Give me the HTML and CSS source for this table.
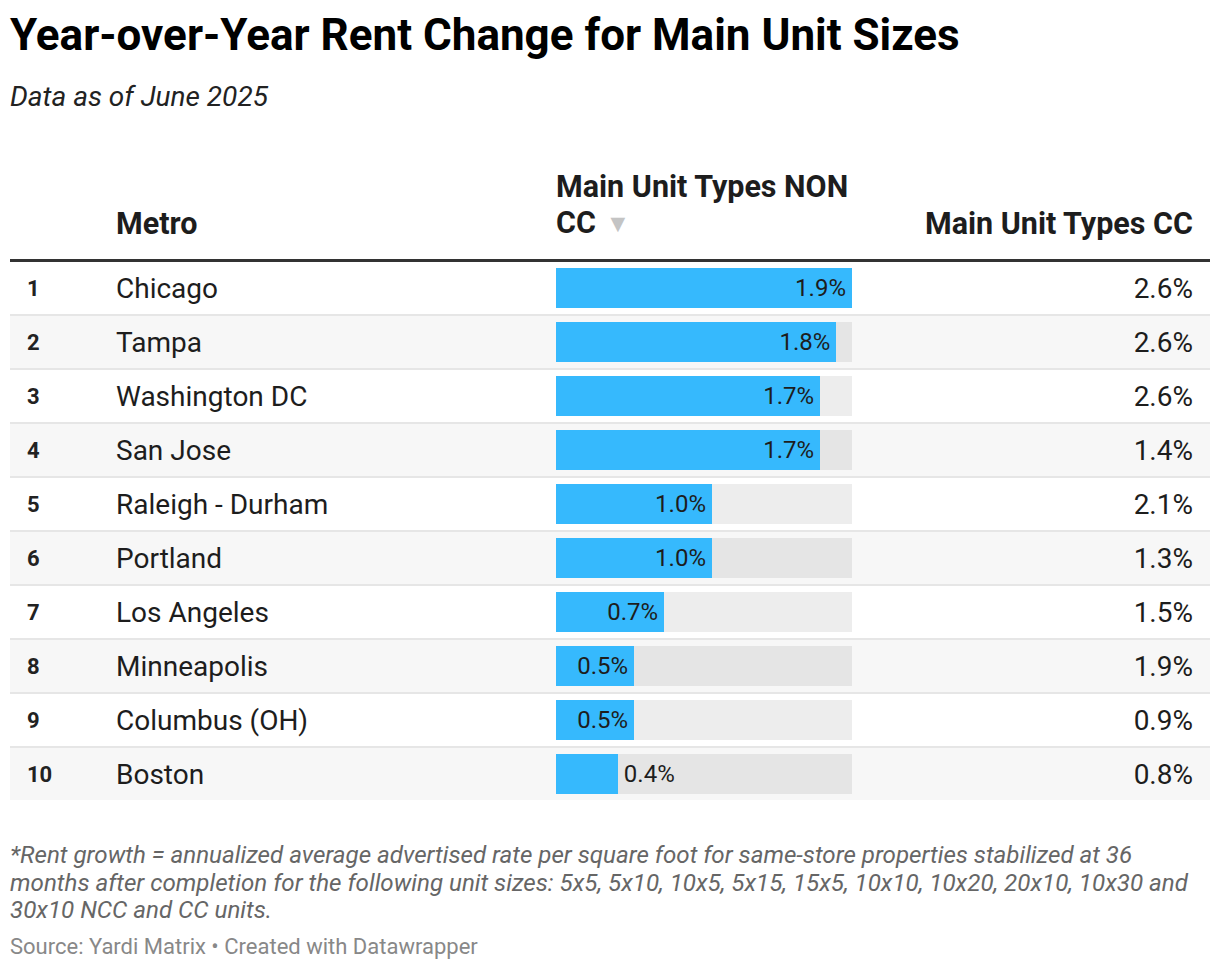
FILE: index.html
```html
<!DOCTYPE html>
<html lang="en">
<head>
<meta charset="utf-8">
<title>Year-over-Year Rent Change for Main Unit Sizes</title>
<link rel="stylesheet" href="styles.css">
</head>
<body>
<div class="chart">
  <h1 class="title">Year-over-Year Rent Change for Main Unit Sizes</h1>
  <p class="subtitle">Data as of June 2025</p>
  <table class="tbl">
    <colgroup>
      <col class="c-rank"><col class="c-metro"><col class="c-bar"><col class="c-cc">
    </colgroup>
    <thead>
      <tr>
        <th class="rank"></th>
        <th class="metro">Metro</th>
        <th class="barh">Main Unit Types NON<br>CC <span class="sort">▼</span></th>
        <th class="cc">Main Unit Types CC</th>
      </tr>
    </thead>
    <tbody>
      <tr><td class="rank">1</td><td class="metro">Chicago</td><td class="barc"><div class="track"><div class="fill in" style="width:100%">1.9%</div></div></td><td class="cc">2.6%</td></tr>
      <tr><td class="rank">2</td><td class="metro">Tampa</td><td class="barc"><div class="track"><div class="fill in" style="width:94.7%">1.8%</div></div></td><td class="cc">2.6%</td></tr>
      <tr><td class="rank">3</td><td class="metro">Washington DC</td><td class="barc"><div class="track"><div class="fill in" style="width:89.2%">1.7%</div></div></td><td class="cc">2.6%</td></tr>
      <tr><td class="rank">4</td><td class="metro">San Jose</td><td class="barc"><div class="track"><div class="fill in" style="width:89.2%">1.7%</div></div></td><td class="cc">1.4%</td></tr>
      <tr><td class="rank">5</td><td class="metro">Raleigh - Durham</td><td class="barc"><div class="track"><div class="fill in" style="width:52.7%">1.0%</div></div></td><td class="cc">2.1%</td></tr>
      <tr><td class="rank">6</td><td class="metro">Portland</td><td class="barc"><div class="track"><div class="fill in" style="width:52.7%">1.0%</div></div></td><td class="cc">1.3%</td></tr>
      <tr><td class="rank">7</td><td class="metro">Los Angeles</td><td class="barc"><div class="track"><div class="fill in" style="width:36.5%">0.7%</div></div></td><td class="cc">1.5%</td></tr>
      <tr><td class="rank">8</td><td class="metro">Minneapolis</td><td class="barc"><div class="track"><div class="fill in" style="width:26.4%">0.5%</div></div></td><td class="cc">1.9%</td></tr>
      <tr><td class="rank">9</td><td class="metro">Columbus (OH)</td><td class="barc"><div class="track"><div class="fill in" style="width:26.4%">0.5%</div></div></td><td class="cc">0.9%</td></tr>
      <tr><td class="rank">10</td><td class="metro">Boston</td><td class="barc"><div class="track"><div class="fill" style="width:20.9%"></div><span class="out">0.4%</span></div></td><td class="cc">0.8%</td></tr>
    </tbody>
  </table>
  <p class="note">*Rent growth = annualized average advertised rate per square foot for same-store properties stabilized at 36 months after completion for the following unit sizes: 5x5, 5x10, 10x5, 5x15, 15x5, 10x10, 10x20, 20x10, 10x30 and 30x10 NCC and CC units.</p>
  <p class="source">Source: Yardi Matrix • Created with Datawrapper</p>
</div>
</body>
</html>
```

FILE: styles.css
```css
html, body {
  margin: 0;
  padding: 0;
  background: #ffffff;
}

body {
  font-family: Roboto, "Liberation Sans", Arial, sans-serif;
  color: #1d1d1d;
}

.chart {
  width: 1200px;
  padding: 9px 10px 0 10px;
}

.title {
  margin: 0;
  font-size: 44px;
  line-height: 52px;
  font-weight: 700;
  color: #000;
}

.subtitle {
  margin: 20px 0 0 0;
  font-size: 28px;
  line-height: 32px;
  font-style: italic;
  color: #222;
}

.tbl {
  margin-top: 56px;
  width: 1200px;
  border-collapse: collapse;
  table-layout: fixed;
}

.c-rank { width: 106px; }
.c-metro { width: 440px; }
.c-bar { width: 296px; }
.c-cc { width: 358px; }

.tbl th {
  font-size: 30.5px;
  line-height: 36px;
  font-weight: 700;
  color: #1d1d1d;
  text-align: left;
  vertical-align: bottom;
  padding: 0 0 17px 0;
  white-space: nowrap;
  border-bottom: 3px solid #333;
}

.tbl th.cc {
  text-align: right;
  padding-right: 17px;
}

.sort {
  color: #c4c4c4;
  font-size: 25px;
  vertical-align: 1px;
  margin-left: 2px;
}

.tbl td {
  height: 52px;
  padding: 0;
  border-bottom: 2px solid #e6e6e6;
  vertical-align: middle;
}

.tbl tbody tr:last-child td {
  border-bottom: none;
}

.tbl tbody tr:nth-child(even) td {
  background: #f7f7f7;
}

.tbl td.rank {
  padding-left: 17px;
  font-size: 22px;
  font-weight: 700;
  color: #222;
}

.tbl td.metro {
  font-size: 28px;
  color: #1d1d1d;
}

.tbl td.cc {
  text-align: right;
  padding-right: 17px;
  font-size: 28px;
  color: #1d1d1d;
}

.track {
  display: flex;
  align-items: center;
  height: 40px;
  background: rgba(0, 0, 0, 0.07);
}

.fill {
  height: 40px;
  background: #36b9fd;
  display: flex;
  align-items: center;
  justify-content: flex-end;
  box-sizing: border-box;
  font-size: 24px;
  color: #1d1d1d;
  white-space: nowrap;
}

.fill.in {
  padding-right: 6px;
}

.out {
  padding-left: 6px;
  font-size: 24px;
  color: #1d1d1d;
}

.note {
  margin: 42px 0 0 0;
  font-size: 24.15px;
  line-height: 27.5px;
  font-style: italic;
  color: #666;
}

.source {
  margin: 9px 0 0 0;
  font-size: 22px;
  line-height: 26px;
  color: #888;
}
```
